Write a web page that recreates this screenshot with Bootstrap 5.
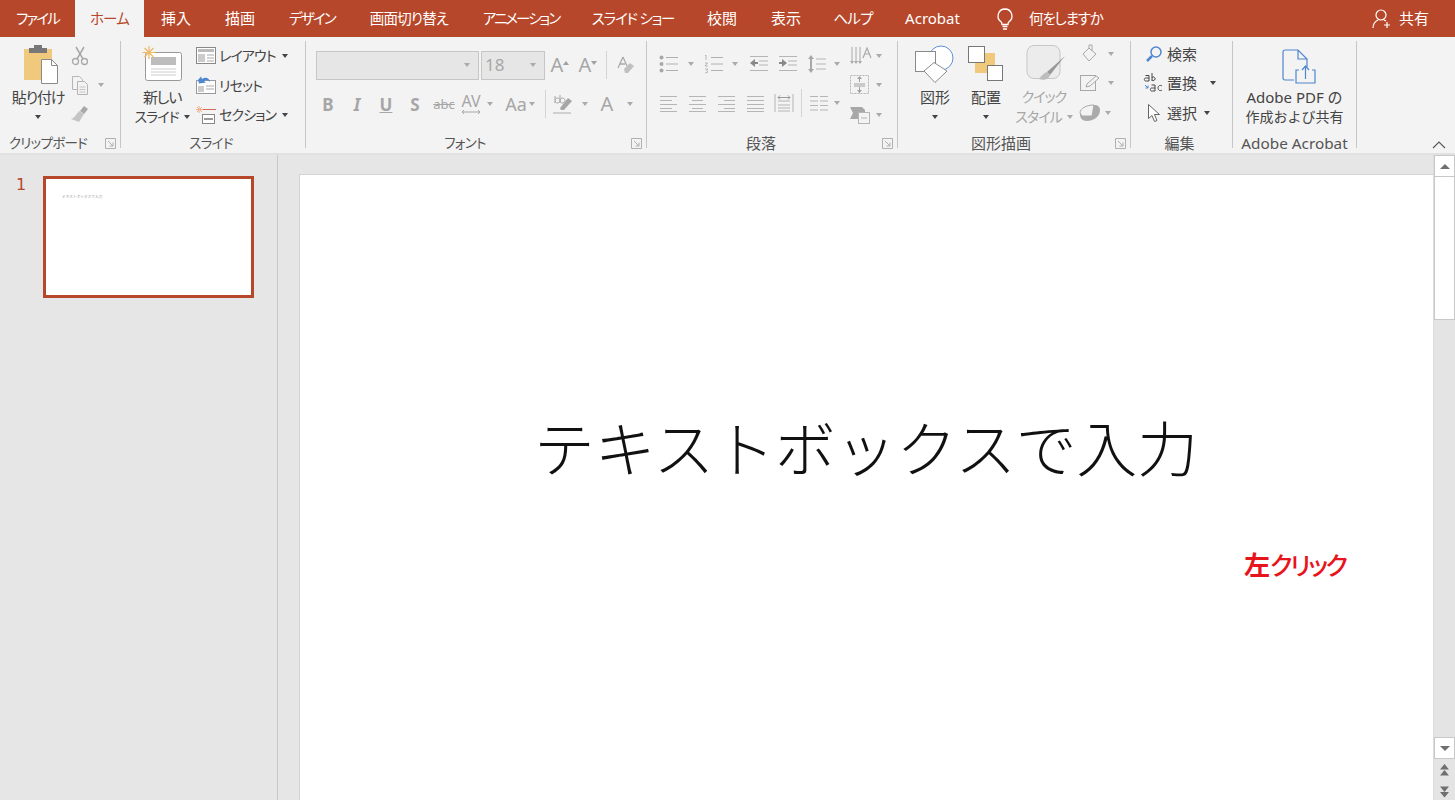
<!DOCTYPE html>
<html lang="ja"><head><meta charset="utf-8"><title>PowerPoint</title>
<link href="https://cdn.jsdelivr.net/npm/bootstrap@5.3.0/dist/css/bootstrap.min.css" rel="stylesheet">
<style>
html,body{height:800px;overflow:hidden}
body{width:1455px;font-family:"Noto Sans","Noto Sans CJK JP",sans-serif;font-size:15px;color:#444;background:#e6e6e6}
svg{overflow:visible}
.n{font-feature-settings:"palt";letter-spacing:-.9px;font-size:14px}
.m{font-feature-settings:"palt";letter-spacing:-1.200px;font-size:15px}
.titlebar{height:37px;background:#b7472a;color:#fff;font-size:15px}
.titlebar .n{font-size:14.5px;letter-spacing:-.8px}
.titlebar .n.t1{letter-spacing:-1.8px}
.titlebar .n.t2{letter-spacing:-2px}
.titlebar .n.t3{letter-spacing:-1.2px}
.titlebar .n.t4{letter-spacing:-1.2px}
.tab{height:37px;display:flex;align-items:center;justify-content:center;white-space:nowrap;flex:none}
.tab.active{background:#f3f3f3;color:#b7472a}
.w4{width:4px}.w8{width:8px}.w10{width:10px}.w12{width:12px}.w16{width:16px}.w18{width:18px}.w20{width:20px}.w22{width:22px}.w24{width:24px}.w26{width:26px}.w28{width:28px}.w30{width:30px}.w32{width:32px}.w34{width:34px}.w36{width:36px}
.w64{width:64px}.w66{width:66px}.w68{width:68px}.w69{width:69px}.w70{width:70px}.w75{width:75px}.w80{width:80px}.w89{width:89px}.w110{width:110px}.w114{width:114px}.w163{width:163px}
.ml2{margin-left:2px}.ml4{margin-left:4px}.ml6{margin-left:6px}.ml8{margin-left:8px}.ml10{margin-left:10px}.ml11{margin-left:11px}.ml16{margin-left:16px}.ml20{margin-left:20px}
.ribbon{height:118px;background:#f3f3f3;border-bottom:2px solid #e1e1e1}
.grp{height:107px;margin-top:4px;border-right:1px solid #c6c6c6;position:relative;flex:none;display:flex;flex-direction:column}
.g1{width:121px}.g2{width:185px}.g3{width:341px}.g4{width:251px}.g5{width:233px}.g6{width:102px}.g7{width:124px}
.gbody{height:94px;display:flex;flex:none}
.glabel{height:17px;line-height:17px;text-align:center;font-size:15px;color:#555;white-space:nowrap}
.glabel.n{font-size:13.5px;letter-spacing:-.7px}
.glabel.wide{font-size:15.3px}
.pr24{padding-right:24px}.pr22{padding-right:22px}.pr26{padding-right:26px}.pr4{padding-right:4px}
.launch{position:absolute;right:4px;bottom:-1px;width:11px;height:11px}
.big{display:flex;flex-direction:column;align-items:center;flex:none}
.bigicon{height:46px;display:flex;align-items:center;justify-content:center}
.shift-r{margin-left:5px}
.shift-a{margin:6px 0 0 8px}
.biglbl{height:20px;line-height:20px;white-space:nowrap;display:flex;align-items:center;justify-content:center}
.biglbl.sm{font-size:14px}
.col-rows{display:flex;flex-direction:column;flex:none}
.col-up{margin-top:-2px}
.srow{height:29.5px;display:flex;align-items:center;white-space:nowrap;flex:none}
.ci{display:flex;align-items:center;justify-content:center;flex:none}
.caret{display:inline-block;width:0;height:0;border-left:3.500px solid transparent;border-right:3.500px solid transparent;border-top:4px solid #444;flex:none}
.off .caret,.caret.off{border-top-color:#aaa}
.off{color:#a6a6a6}
.frow{display:flex;align-items:center;height:30px;flex:none}
.mt9{margin-top:9px}.mt8{margin-top:8px}
.sel{height:29px;background:#e6e6e6;border:1px solid #c6c6c6;display:flex;align-items:center;justify-content:space-between;padding:0 8px 0 3px;color:#a6a6a6;font-size:17px}
.vsep{width:1px;height:28px;background:#d4d4d4;flex:none}
.lt{font-weight:700;font-size:17px;line-height:1;color:#a6a6a6}
.ltm{font-size:16px;line-height:1;color:#a6a6a6}
.lta{font-size:20px;line-height:1;color:#a6a6a6}
.up5{width:0;height:0;border-left:3.500px solid transparent;border-right:3.500px solid transparent;border-bottom:4px solid #a0a0a0;align-self:flex-start;margin:6px 0 0 0}
.dn5{width:0;height:0;border-left:3.500px solid transparent;border-right:3.500px solid transparent;border-top:4px solid #a0a0a0;align-self:flex-start;margin:6px 0 0 0}
.aa{font-size:18px}
.under{text-decoration:underline}
.strike{text-decoration:line-through;font-size:13px}
.italic{font-style:italic}
.collapse-btn{align-self:flex-end;margin:0 8px 3px auto;width:16px;height:10px}
.work{height:645px;overflow:hidden}
.side{width:278px;border-right:1px solid #c8c8c8;flex:none;padding:21px 0 0 16px}
.num{width:27px;color:#b7472a;font:16px/18px "DejaVu Sans",sans-serif;flex:none}
.thumb{width:211px;height:122px;background:#fff;border:3px solid #b7472a;padding:15px 0 0 16px;font-size:3.700px;line-height:6px;color:#999;white-space:nowrap}
.stage{padding:19px 0 0 21px;flex:1 1 auto;min-width:0}
.slide{background:#fff;height:700px;position:relative;border:1px solid #d4d4d4;border-right:0}
.bigtext{position:absolute;left:234px;top:231px;font-size:60.700px;line-height:80px;color:#111;font-weight:300;white-space:nowrap;font-family:"Noto Sans CJK JP",sans-serif}
.note{position:absolute;left:944px;top:372px;color:#e8141c;font-weight:500;font-size:25px;line-height:34px;white-space:nowrap;font-family:"Noto Sans CJK JP",sans-serif;font-feature-settings:"palt";letter-spacing:-2.400px}
.note b{font-size:26px;font-weight:700;letter-spacing:0}
.sb{width:22px;height:648px;align-self:flex-start;flex:none;display:flex;flex-direction:column;background:#e4e4e4;border-left:1px solid #dcdcdc}
.sbbtn{height:22px;background:#fff;border:1px solid #c8c8c8;display:flex;align-items:center;justify-content:center;flex:none}
.thumbbar{height:143px;background:#fff;border:1px solid #c8c8c8;border-top:0;flex:none}
.track{flex:1 1 auto}
.tri-up{width:0;height:0;border-left:5px solid transparent;border-right:5px solid transparent;border-bottom:5px solid #6f6f6f}
.tri-dn{width:0;height:0;border-left:5px solid transparent;border-right:5px solid transparent;border-top:5px solid #6f6f6f}
.nav{height:22px;display:flex;align-items:center;justify-content:center;flex:none}
</style></head><body>
<svg width="0" height="0" class="d-block" aria-hidden="true"><defs>
<symbol id="launch" viewBox="0 0 11 11"><path d="M.5 10.500V.5h10v10z M3 3l5 5 M8 4.500V8H4.500" fill="none" stroke="#b0b0b0"/></symbol>
<symbol id="lines4l" viewBox="0 0 20 20"><path d="M1 3.500h17M1 7.500h12M1 11.500h17M1 15.500h12M1 18.500h17" stroke="#b5b5b5" fill="none"/></symbol>
<symbol id="lines4c" viewBox="0 0 20 20"><path d="M1 3.500h17M4 7.500h11M1 11.500h17M4 15.500h11M1 18.500h17" stroke="#b5b5b5" fill="none"/></symbol>
<symbol id="lines4r" viewBox="0 0 20 20"><path d="M1 3.500h17M7 7.500h11M1 11.500h17M7 15.500h11M1 18.500h17" stroke="#b5b5b5" fill="none"/></symbol>
<symbol id="lines4j" viewBox="0 0 20 20"><path d="M1 3.500h17M1 7.500h17M1 11.500h17M1 15.500h17M1 18.500h17" stroke="#b5b5b5" fill="none"/></symbol>
</defs></svg>

<div class="titlebar d-flex align-items-center">
<div class="tab w75"><span class="n t1">ファイル</span></div>
<div class="tab w69 active"><span class="n">ホーム</span></div>
<div class="tab w64">挿入</div><div class="tab w64">描画</div>
<div class="tab w80"><span class="n t1">デザイン</span></div>
<div class="tab w114"><span class="n">画面切り替え</span></div>
<div class="tab w110"><span class="n t2">アニメーション</span></div>
<div class="tab w114"><span class="n t3">スライド ショー</span></div>
<div class="tab w64">校閲</div><div class="tab w64">表示</div>
<div class="tab w70"><span class="n">ヘルプ</span></div>
<div class="tab w89">Acrobat</div>
<svg class="ml20" width="16" height="22" viewBox="0 0 16 22"><path d="M8 1a7 7 0 0 0-4 12.700c.8.7 1 1.500 1 2.800h6c0-1.300.2-2.100 1-2.800A7 7 0 0 0 8 1zM5.500 18.500h5M6 21h4" fill="none" stroke="#fff" stroke-width="1.300"/></svg>
<span class="ml16 n t4">何をしますか</span>
<div class="d-flex align-items-center ms-auto">
<svg width="19" height="20" viewBox="0 0 19 20"><circle cx="9" cy="6" r="5" fill="none" stroke="#fff" stroke-width="1.200"/><path d="M1 19c0-5 3-7 5-8M12 11l2 1M15 13v6M12 16h6" fill="none" stroke="#fff" stroke-width="1.200"/></svg>
<span class="ml8">共有</span><span class="w26 d-block"></span>
</div>
</div>

<div class="ribbon d-flex">
 <!-- clipboard -->
 <div class="grp g1"><div class="gbody">
  <div class="big ml6 w64"><div class="bigicon shift-r">
   <svg width="36" height="40" viewBox="0 0 36 40"><rect x="1" y="5" width="28" height="31" fill="#f0c97c"/><rect x="6" y="4" width="18" height="5" fill="#777"/><rect x="11" y="1" width="8" height="4" fill="#777"/><path d="M18.500 15.500h10l6 6v18h-16z" fill="#fff" stroke="#8a8a8a"/><path d="M28.500 15.500v6h6" fill="none" stroke="#8a8a8a"/></svg>
  </div><div class="biglbl m">貼り付け</div><div class="biglbl"><span class="caret"></span></div></div>
  <div class="col-rows">
   <div class="srow"><span class="ci w20"><svg width="18" height="20" viewBox="0 0 18 20"><path d="M5 1l7 12M13 1L6 13" stroke="#a8a8a8" stroke-width="1.500" fill="none"/><circle cx="4.500" cy="15.500" r="3" fill="none" stroke="#a8a8a8" stroke-width="1.300"/><circle cx="13.500" cy="15.500" r="3" fill="none" stroke="#a8a8a8" stroke-width="1.300"/></svg></span></div>
   <div class="srow off"><span class="ci w20"><svg width="18" height="20" viewBox="0 0 18 20"><path d="M1.500 1.500h7l3 3v10h-10z" fill="#f3f3f3" stroke="#b5b5b5"/><path d="M6.500 6.500h7l3 3v10h-10z" fill="#f3f3f3" stroke="#b5b5b5"/><path d="M8.500 12h6M8.500 14.500h6M8.500 17h6" stroke="#c5c5c5"/></svg></span><span class="ci w22"><span class="caret"></span></span></div>
   <div class="srow"><span class="ci w20"><svg width="20" height="20" viewBox="0 0 20 20"><path d="M14 1l4 3-4 5-4-3z" fill="#a8a8a8"/><path d="M9 6l5 3-5 8-8-3c3-1 5-4 8-8z" fill="#c5c5c5"/></svg></span></div>
  </div></div>
  <div class="glabel n pr24">クリップボード</div>
  <svg class="launch"><use href="#launch"/></svg>
 </div>
 <!-- slides -->
 <div class="grp g2"><div class="gbody">
  <div class="big ml8 w66"><div class="bigicon">
   <svg width="40" height="36" viewBox="0 0 40 36"><rect x="3.500" y="6.500" width="36" height="28" rx="2" fill="#fff" stroke="#999"/><rect x="9" y="11" width="25" height="8" fill="#bdbdbd"/><path d="M9 23h25M9 26h25M9 29h25" stroke="#ccc"/><path d="M7 0v13M0.500 6.500h13M2.500 2l9 9M11.500 2l-9 9" stroke="#efb865" stroke-width="1.200"/></svg>
  </div><div class="biglbl m">新しい</div><div class="biglbl n">スライド&nbsp;<span class="caret ml2"></span></div></div>
  <div class="col-rows">
   <div class="srow"><span class="ci w22"><svg width="20" height="18" viewBox="0 0 20 18"><rect x=".5" y=".5" width="19" height="16" fill="#fff" stroke="#888"/><rect x="2" y="2" width="16" height="3" fill="#bbb"/><rect x="2" y="7" width="7" height="8" fill="#ccc"/><path d="M11 8h7M11 11h7M11 14h7" stroke="#aaa"/></svg></span><span class="n ml2">レイアウト</span><span class="caret ml6"></span></div>
   <div class="srow"><span class="ci w22"><svg width="20" height="20" viewBox="0 0 20 20"><rect x=".5" y="5.500" width="19" height="13" fill="#fff" stroke="#999"/><rect x="2" y="11" width="6" height="6" fill="#ccc"/><path d="M10 11h8M10 14h8" stroke="#aaa"/><path d="M2 5l3-3.500L6 4c3-2 7-2 8 3-2-2-4-2-6-1l2 1.500-7 1z" fill="#4e87cf"/></svg></span><span class="n ml2">リセット</span></div>
   <div class="srow"><span class="ci w22"><svg width="20" height="20" viewBox="0 0 20 20"><path d="M3 1v7M0 4.500h7M1 2l5 5M6 2l-5 5" stroke="#efb08a"/><path d="M7 4.500h13" stroke="#d9685a"/><rect x="6.500" y="9.500" width="12" height="9" fill="#fff" stroke="#888"/><path d="M8 14h9" stroke="#999" stroke-width="2"/></svg></span><span class="n ml2">セクション</span><span class="caret ml6"></span></div>
  </div></div>
  <div class="glabel n pr4">スライド</div>
 </div>
 <!-- font -->
 <div class="grp g3"><div class="gbody flex-column">
  <div class="frow mt9">
   <div class="sel ml10 w163"><span></span><span class="caret off"></span></div>
   <div class="sel ml2 w64"><span>18</span><span class="caret off"></span></div>
   <span class="ci w30"><span class="lta">A</span><span class="up5"></span></span>
   <span class="ci w26"><span class="lta">A</span><span class="dn5"></span></span>
   <span class="ci w10"><span class="vsep"></span></span>
   <span class="ci w28"><svg width="20" height="20" viewBox="0 0 20 20"><path d="M8 2L3 13M8 2l4 9M5 9h5" stroke="#aaa" fill="none" stroke-width="1.300"/><path d="M9 14l6-6 4 3-6 7H10z" fill="#c0c0c0"/></svg></span>
  </div>
  <div class="frow mt9 ml10">
   <span class="ci w24 lt">B</span><span class="ci w34 lt italic">I</span><span class="ci w24 lt under">U</span><span class="ci w34 lt">S</span><span class="ci w24 ltm strike">abc</span>
   <span class="ci w30 flex-column"><span class="ltm small">AV</span><svg width="20" height="6" viewBox="0 0 20 6"><path d="M1 3h18M3 1L1 3l2 2M17 1l2 2-2 2" stroke="#a6a6a6" fill="none"/></svg></span><span class="ci w8 off"><span class="caret"></span></span>
   <span class="ci ml11 w22 ltm aa">Aa</span><span class="ci w10 off"><span class="caret"></span></span>
   <span class="ci w16"><span class="vsep"></span></span>
   <span class="ci w20 flex-column"><svg width="22" height="20" viewBox="0 0 22 20"><path d="M3 9V2M3 6a2.500 2.500 0 1 1 0 1M8 1v8M8 6a2.500 2.500 0 1 1 0 1" stroke="#a6a6a6" fill="none"/><path d="M8 14l8-10 4 3-8 9H9z" fill="#a6a6a6"/><path d="M1 19h18" stroke="#d0d0d0" stroke-width="2"/></svg></span><span class="ci w24 off"><span class="caret"></span></span>
   <span class="ci w20 ltm fs-5">A</span><span class="ci w26 off"><span class="caret"></span></span>
  </div>
  </div>
  <div class="glabel n pr22">フォント</div>
  <svg class="launch"><use href="#launch"/></svg>
 </div>
 <!-- paragraph -->
 <div class="grp g4"><div class="gbody">
  <div class="col-rows ml8">
   <div class="frow mt8 off">
    <span class="ci w28"><svg width="20" height="20" viewBox="0 0 20 20"><g fill="#a8a8a8"><circle cx="2.500" cy="3.500" r="2"/><circle cx="2.500" cy="10" r="2"/><circle cx="2.500" cy="16.500" r="2"/></g><path d="M7 3.500h12M7 10h12M7 16.500h12" stroke="#b0b0b0"/></svg></span>
    <span class="ci w16"><span class="caret"></span></span>
    <span class="ci w30"><svg width="20" height="20" viewBox="0 0 20 20"><path d="M2 1v5M1 2l1-1M1 9h2.500l-2.500 3h3M1 15h3l-1.500 1.500L4 18l-3 1" stroke="#a8a8a8" fill="none" stroke-width=".8"/><path d="M7 3.500h12M7 10h12M7 16.500h12" stroke="#b0b0b0"/></svg></span>
    <span class="ci w12"><span class="caret"></span></span>
    <span class="ci w36"><svg width="20" height="20" viewBox="0 0 20 20"><path d="M1 2.500h18M10 7h9M10 11h9M1 16.500h18" stroke="#b5b5b5"/><path d="M1 9l5-4v3h3v2H6v3z" fill="#888"/></svg></span>
    <span class="ci w22"><svg width="20" height="20" viewBox="0 0 20 20"><path d="M1 2.500h18M10 7h9M10 11h9M1 16.500h18" stroke="#b5b5b5"/><path d="M9 9L4 5v3H1v2h3v3z" fill="#888"/></svg></span>
    <span class="ci w36"><svg width="20" height="20" viewBox="0 0 20 20"><path d="M9 5h10M9 10h10M9 15h10" stroke="#b5b5b5"/><path d="M4 1L1 5h2v10H1l3 4 3-4H5V5h2z" fill="#a8a8a8"/></svg></span>
    <span class="ci w4"><span class="caret"></span></span>
   </div>
   <div class="frow mt9 off">
    <span class="ci w28"><svg width="20" height="20"><use href="#lines4l"/></svg></span>
    <span class="ci w30"><svg width="20" height="20"><use href="#lines4c"/></svg></span>
    <span class="ci w28"><svg width="20" height="20"><use href="#lines4r"/></svg></span>
    <span class="ci w30"><svg width="20" height="20"><use href="#lines4j"/></svg></span>
    <span class="ci w26"><svg width="20" height="20" viewBox="0 0 20 20"><path d="M1 1v18M19 1v18M4 8h12M4 12h12M4 15h12M4 18h12" stroke="#b5b5b5"/><path d="M4 4.500h12M6 2.500l-2 2 2 2M14 2.500l2 2-2 2" stroke="#999" fill="none"/></svg></span>
    <span class="ci w8"><span class="vsep"></span></span>
    <span class="ci w28"><svg width="18" height="20" viewBox="0 0 18 20"><path d="M0 3.500h8M10 3.500h8M0 8h8M10 8h8M0 12.500h8M10 12.500h8M0 17h8M10 17h8" stroke="#b5b5b5"/></svg></span>
    <span class="ci w8"><span class="caret"></span></span>
   </div>
  </div>
  <div class="col-rows ml8 off">
   <div class="srow"><span class="ci w22"><svg width="20" height="20" viewBox="0 0 20 20"><path d="M2 1v15M6 1v15M10 1v15" stroke="#a8a8a8"/><path d="M0 15l2 3 2-3zM4 15l2 3 2-3zM8 15l2 3 2-3z" fill="#a8a8a8"/><path d="M13 12l4-10 4 10M14.500 8h5" stroke="#a8a8a8" fill="none" stroke-width="1.200"/></svg></span><span class="ci w16"><span class="caret"></span></span></div>
   <div class="srow"><span class="ci w22"><svg width="20" height="20" viewBox="0 0 20 20"><rect x=".5" y=".5" width="18" height="18" fill="none" stroke="#b5b5b5" stroke-dasharray="2 1"/><path d="M9.500 2v5M9.500 12v6M4 9h11M4 11h11" stroke="#a0a0a0"/><path d="M7 4l2.500-3L12 4zM7 15l2.500 3 2.500-3z" fill="#a0a0a0"/></svg></span><span class="ci w16"><span class="caret"></span></span></div>
   <div class="srow"><span class="ci w22"><svg width="20" height="18" viewBox="0 0 20 18"><path d="M0 1h12l3 3v6l-3 3H0l3-6z" fill="#a8a8a8"/><rect x="8.500" y="6.500" width="11" height="11" fill="#f3f3f3" stroke="#b5b5b5"/><path d="M11 12h6" stroke="#b5b5b5"/></svg></span><span class="ci w16"><span class="caret"></span></span></div>
  </div></div>
  <div class="glabel pr22">段落</div>
  <svg class="launch"><use href="#launch"/></svg>
 </div>
 <!-- drawing -->
 <div class="grp g5"><div class="gbody">
  <div class="big ml4 w66"><div class="bigicon">
   <svg width="40" height="38" viewBox="0 0 40 38"><circle cx="26" cy="13" r="12" fill="#fff" stroke="#5b8fd6"/><rect x=".5" y="6.500" width="20" height="20" fill="#fff" stroke="#8a8a8a"/><path d="M19 17.500L32 26 20 37.500 9 26z" fill="#fff" stroke="#8a8a8a"/></svg>
  </div><div class="biglbl">図形</div><div class="biglbl"><span class="caret"></span></div></div>
  <div class="big w36"><div class="bigicon">
   <svg width="36" height="36" viewBox="0 0 36 36"><rect x="7" y="7" width="20" height="20" fill="#f0c97c"/><rect x=".5" y=".5" width="16" height="16" fill="#fff" stroke="#777"/><rect x="19.500" y="19.500" width="15" height="15" fill="#fff" stroke="#777"/></svg>
  </div><div class="biglbl">配置</div><div class="biglbl"><span class="caret"></span></div></div>
  <div class="big ml6 w68 off"><div class="bigicon">
   <svg class="ml4" width="40" height="38" viewBox="0 0 40 38"><rect x="1" y="0.500" width="33" height="33" rx="7" fill="#ececec" stroke="#c6c6c6"/><path d="M39 11L24 30l-3-3z" fill="#999"/><path d="M21 27c-3 1-5 3-8 7 5 2 10 0 11-4z" fill="#bdbdbd"/></svg>
  </div><div class="biglbl n">クイック</div><div class="biglbl n">スタイル&nbsp;<span class="caret ml2"></span></div></div>
  <div class="col-rows col-up off">
   <div class="srow"><span class="ci w24"><svg width="18" height="18" viewBox="0 0 18 18"><path d="M8 3L2 9l6 7 7-7z" fill="#f3f3f3" stroke="#a8a8a8"/><path d="M8 3V0h3v6" fill="none" stroke="#a8a8a8"/></svg></span><span class="ci w18"><span class="caret"></span></span></div>
   <div class="srow"><span class="ci w24"><svg width="20" height="16" viewBox="0 0 20 16"><rect x=".5" y=".5" width="15" height="15" fill="none" stroke="#a8a8a8"/><path d="M6 12l1-3L16 1l3 2-9 8z" fill="#f3f3f3" stroke="#a8a8a8"/></svg></span><span class="ci w18"><span class="caret"></span></span></div>
   <div class="srow"><span class="ci w24"><svg width="22" height="18" viewBox="0 0 22 18"><path d="M1 10c0-6 7-9 14-9 4 0 6 2 6 5 0 7-7 11-13 11C3 17 1 14 1 10z" fill="#aaa"/><path d="M1 9c0-5 7-8 14-8l-2 11H3z" fill="#f3f3f3" stroke="#aaa"/></svg></span><span class="ci w12"><span class="caret"></span></span></div>
  </div></div>
  <div class="glabel pr26">図形描画</div>
  <svg class="launch"><use href="#launch"/></svg>
 </div>
 <!-- edit -->
 <div class="grp g6"><div class="gbody"><div class="col-rows col-up ml10">
   <div class="srow"><span class="ci w26"><svg width="18" height="18" viewBox="0 0 18 18"><circle cx="11" cy="7" r="5" fill="none" stroke="#4e87cf" stroke-width="1.500"/><path d="M7 11l-5 5" stroke="#4e87cf" stroke-width="2.500"/></svg></span><span class="w30">検索</span></div>
   <div class="srow"><span class="ci w26"><svg width="20" height="20" viewBox="0 0 20 20"><path d="M1.500 2.500h3.500v5.500H2.500a1.600 1.600 0 1 1 0-3H5M8 0v8M8 4.500a1.800 1.800 0 1 1 0 2.500" stroke="#444" fill="none"/><path d="M7.500 12h3.500v6H8.500a1.600 1.600 0 1 1 0-3h2.500M18 13c-2-1.500-4 0-4 2s2 3.500 4 2" stroke="#444" fill="none"/><path d="M1 12l3 3M1.500 15H4v-2.500" stroke="#4e87cf" fill="none"/></svg></span><span class="w30">置換</span><span class="ci w32"><span class="caret"></span></span></div>
   <div class="srow"><span class="ci w26"><svg width="14" height="20" viewBox="0 0 14 20"><path d="M1.500 1.500v14l3.500-3 2.500 6 2.500-1-2.500-6h5z" fill="#fff" stroke="#666"/></svg></span><span class="w30">選択</span><span class="ci w20"><span class="caret"></span></span></div>
  </div></div>
  <div class="glabel pr4">編集</div>
 </div>
 <!-- acrobat -->
 <div class="grp g7"><div class="gbody">
  <div class="big w-100"><div class="bigicon">
   <svg class="shift-a" width="34" height="36" viewBox="0 0 34 36"><path d="M12 31H3a2 2 0 0 1-2-2V3a2 2 0 0 1 2-2h13l9 9v8M16 1v9h9" fill="none" stroke="#4e87cf" stroke-width="1.200"/><path d="M17 21h-3v13h19V21h-3M23.500 30V18M20 21l3.500-4 3.500 4" fill="none" stroke="#4e87cf" stroke-width="1.200"/></svg>
  </div><div class="biglbl">Adobe PDF の</div><div class="biglbl sm">作成および共有</div></div>
  </div>
  <div class="glabel wide">Adobe Acrobat</div>
 </div>
 <svg class="collapse-btn" viewBox="0 0 16 10"><path d="M2 8l6-6 6 6" fill="none" stroke="#555" stroke-width="1.100"/></svg>
</div>

<div class="work d-flex">
 <div class="side d-flex align-items-start">
  <div class="num">1</div>
  <div class="thumb">テキストボックスで入力</div>
 </div>
 <div class="stage"><div class="slide">
  <div class="bigtext">テキストボックスで入力</div>
  <div class="note"><b>左</b>クリック</div>
 </div></div>
 <div class="sb">
  <div class="sbbtn"><span class="tri-up"></span></div>
  <div class="thumbbar"></div>
  <div class="track"></div>
  <div class="sbbtn"><span class="tri-dn"></span></div>
  <div class="nav"><svg width="11" height="12" viewBox="0 0 11 12"><path d="M5.500 0L10 5.500H1zM5.500 6L10 11.500H1z" fill="#6f6f6f"/></svg></div>
  <div class="nav"><svg width="11" height="12" viewBox="0 0 11 12"><path d="M1 .5h9L5.500 6zM1 6h9l-4.500 5.500z" fill="#6f6f6f"/></svg></div>
 </div>
</div>
<script src="https://cdn.jsdelivr.net/npm/bootstrap@5.3.0/dist/js/bootstrap.bundle.min.js"></script>
</body></html>
